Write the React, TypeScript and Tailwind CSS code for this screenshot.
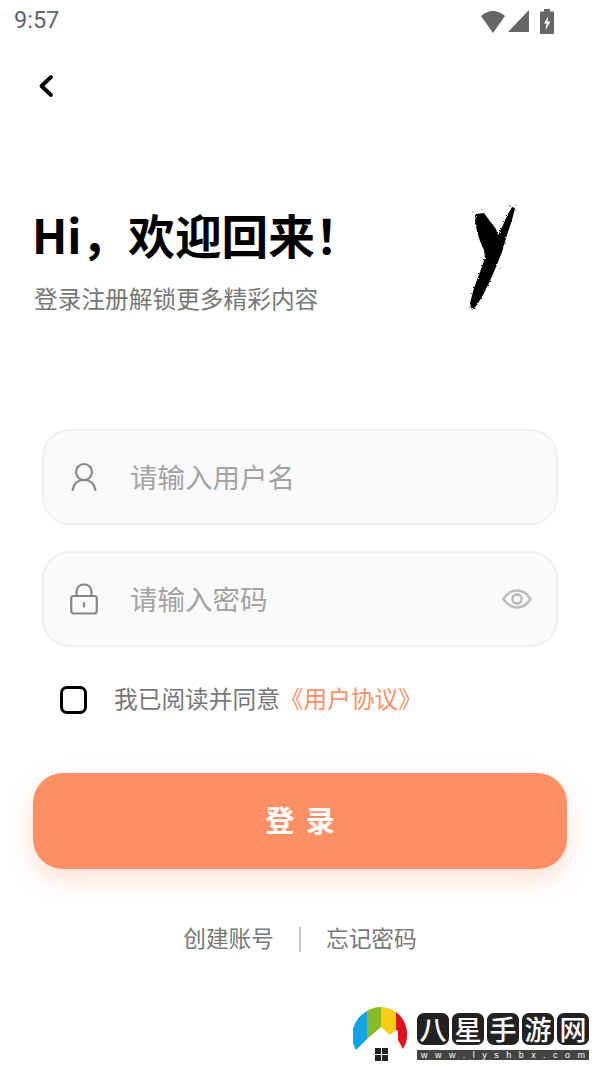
import { useState } from "react";

const cjk = "font-['Noto_Sans_CJK_SC','Noto_Sans',sans-serif]";

function StatusBar() {
  return (
    <div className="flex h-[42px] items-center justify-between pl-[14px] pr-[46px] text-[#666]">
      <span className="font-['Roboto',sans-serif] text-[23.5px] leading-none">9:57</span>
      <div className="flex items-center">
        <svg width="24" height="24" viewBox="0 0 24 24" className="mr-[3px]">
          <path d="M0 7 Q12 -3 24 7 L12 24 Z" fill="#666" />
        </svg>
        <svg width="21" height="24" viewBox="0 0 21 24" className="mr-[11px]">
          <path d="M0 23 L21 1 V23 Z" fill="#666" />
        </svg>
        <svg width="14" height="25" viewBox="0 0 14 25">
          <path d="M4 0 H10 V2.5 H13 Q14 2.5 14 3.5 V24 Q14 25 13 25 H1 Q0 25 0 24 V3.5 Q0 2.5 1 2.5 H4 Z" fill="#666" />
          <path d="M8.5 7 L4 14.5 H6.5 L5.5 21 L10.5 12.5 H7.5 Z" fill="#fff" />
        </svg>
      </div>
    </div>
  );
}

function BrushY() {
  return (
    <svg width="100" height="130" viewBox="0 0 100 130" className="shrink-0">
      <defs>
        <filter id="brush" x="-10%" y="-10%" width="120%" height="120%">
          <feTurbulence type="fractalNoise" baseFrequency="0.6" numOctaves="2" seed="4" />
          <feDisplacementMap in="SourceGraphic" scale="2.5" />
        </filter>
      </defs>
      <path
        filter="url(#brush)"
        d="M36 24 L44 23 L49 30 L56 39 L58 45 L63 35 L68 24 L72 17 L75 18 L72 30 L67 45 L62 62 L56 77 L49 93 L43 105 L37 115 L32 120 L30 113 L34 98 L40 82 L45 68 L44 60 L40 51 L37 41 L35 31 Z"
        fill="#000"
      />
      <g fill="#000" opacity="0.4">
        <circle cx="33" cy="22" r="0.8" />
        <circle cx="42" cy="20" r="0.8" />
        <circle cx="70" cy="16" r="1" />
        <circle cx="76" cy="15" r="0.8" />
        <circle cx="30" cy="117" r="1" />
        <circle cx="35" cy="118" r="0.8" />
        <circle cx="60" cy="78" r="0.7" />
      </g>
    </svg>
  );
}

function Field({ icon, placeholder, trailing }: { icon: React.ReactNode; placeholder: string; trailing?: React.ReactNode }) {
  return (
    <div className="mx-[42px] flex h-[96px] items-center rounded-[28px] border-2 border-[#f1f1f1] bg-[#fafafa] pl-[25px] pr-[24px]">
      <div className="flex w-[30px] justify-center">{icon}</div>
      <span className={`ml-[31px] flex-1 pb-[1px] text-[27.5px] leading-none text-[#a3a3a3] ${cjk}`}>{placeholder}</span>
      {trailing}
    </div>
  );
}

export default function App() {
  const [agreed, setAgreed] = useState(false);

  return (
    <div className={`relative h-[1066px] w-[600px] overflow-hidden bg-white ${cjk}`}>
      <StatusBar />

      <button className="ml-[36px] mt-[29px] block h-[30px] w-[20px]">
        <svg width="20" height="30" viewBox="0 0 20 30">
          <path d="M15 6 L5.5 15 L15 24" fill="none" stroke="#000" strokeWidth="3.8" strokeLinecap="round" strokeLinejoin="round" />
        </svg>
      </button>

      {/* Heading */}
      <div className="mt-[89px] flex items-start justify-between pl-[32px] pr-[60px]">
        <div className="pt-[16px]">
          <h1 className="text-[46.7px] font-bold leading-[56px] text-black">Hi，欢迎回来！</h1>
          <p className="ml-[2px] mt-[20px] text-[23.7px] leading-[32px] text-[#777]">登录注册解锁更多精彩内容</p>
        </div>
        <BrushY />
      </div>

      {/* Form */}
      <div className="mt-[109px] flex flex-col gap-[26px]">
        <Field
          placeholder="请输入用户名"
          icon={
            <svg width="26" height="30" viewBox="0 0 26 30" fill="none" stroke="#888" strokeWidth="2.2" strokeLinecap="round">
              <circle cx="13" cy="10" r="8" />
              <path d="M1.5 28 C3 21 7.5 18 13 18 C18.5 18 23 21 24.5 28" />
            </svg>
          }
        />
        <Field
          placeholder="请输入密码"
          icon={
            <svg width="28" height="32" viewBox="0 0 28 32" fill="none" stroke="#888" strokeWidth="2.2" strokeLinecap="round">
              <rect x="1.2" y="13" width="25.6" height="17.5" rx="2.5" />
              <path d="M6.5 13 V9 C6.5 4.5 9.5 1.5 14 1.5 C18.5 1.5 21.5 4.5 21.5 9 V13" />
              <path d="M14 20 V23.5" />
            </svg>
          }
          trailing={
            <svg width="30" height="20" viewBox="0 0 30 20" fill="none" stroke="#bdbdbd" strokeWidth="2.6">
              <path d="M1.5 10 C5 4.5 9.5 1.5 15 1.5 C20.5 1.5 25 4.5 28.5 10 C25 15.5 20.5 18.5 15 18.5 C9.5 18.5 5 15.5 1.5 10 Z" />
              <circle cx="15" cy="10" r="4.6" />
            </svg>
          }
        />
      </div>

      {/* Agreement */}
      <label className="ml-[60px] mt-[37px] flex h-[32px] items-center">
        <input type="checkbox" checked={agreed} onChange={(e) => setAgreed(e.target.checked)} className="sr-only" />
        <span className="h-[28px] w-[27px] rounded-[7px] border-[3px] border-black" />
        <span className="ml-[27px] -mt-[4px] text-[23.7px] leading-[32px] text-[#777]">
          我已阅读并同意<span className="text-[#ff9066]">《用户协议》</span>
        </span>
      </label>

      {/* Login */}
      <button className="mx-[33px] mt-[57px] flex h-[96px] w-[534px] items-center justify-center rounded-[30px] bg-[#ff9066] pb-[2px] text-[29px] font-bold tracking-[0.4em] text-white shadow-[0_10px_24px_rgba(255,144,102,0.28)]">
        <span className="pl-[0.4em]">登录</span>
      </button>

      <div className="mt-[55px] flex items-center justify-center text-[22.7px] leading-[28px] text-[#777]">
        <span className="pb-[2px]">创建账号</span>
        <span className="mx-[25px] h-[25px] w-[2px] bg-[#c8c8c8]" />
        <span className="pb-[2px]">忘记密码</span>
      </div>

      {/* Site watermark */}
      <div className="absolute bottom-[6px] left-[353px] flex items-end">
        <div className="relative h-[56px] w-[57px]">
          <svg width="57" height="56" viewBox="0 0 57 56" className="absolute left-0 top-0">
            <path d="M3 46 A28 28 0 0 1 14 7 L14 35 Z" fill="#0ea5e9" />
            <path d="M14 7 A28 28 0 0 1 28 3 L28 23 L14 35 Z" fill="#86bc25" />
            <path d="M28 3 A28 28 0 0 1 43 8 L43 26 L37 31 L28 23 Z" fill="#facc15" />
            <path d="M43 8 A28 28 0 0 1 50 45 L45 36 L45 27 L43 26 Z" fill="#e3101e" />
          </svg>
          <div className="absolute -bottom-[1px] left-[22px] grid h-[13px] w-[13px] grid-cols-2 gap-[1px]">
            <span className="bg-[#222]" />
            <span className="bg-[#222]" />
            <span className="bg-[#222]" />
            <span className="bg-[#222]" />
          </div>
        </div>
        <div className="ml-[7px] flex w-[172px] flex-col">
          <div className="flex justify-between">
            {["八", "星", "手", "游", "网"].map((c) => (
              <span key={c} className="flex h-[32px] w-[32px] items-center justify-center rounded-[7px] bg-[#222] pb-[2px] text-[27px] font-medium leading-none text-white">
                {c}
              </span>
            ))}
          </div>
          <div className="mt-[5px] flex h-[10px] items-center justify-between bg-[#444] px-[4px] font-['Liberation_Sans',sans-serif] text-[9px] leading-none text-white">
            {"www.lyshbx.com".split("").map((c, i) => (
              <span key={i}>{c}</span>
            ))}
          </div>
        </div>
      </div>
    </div>
  );
}
